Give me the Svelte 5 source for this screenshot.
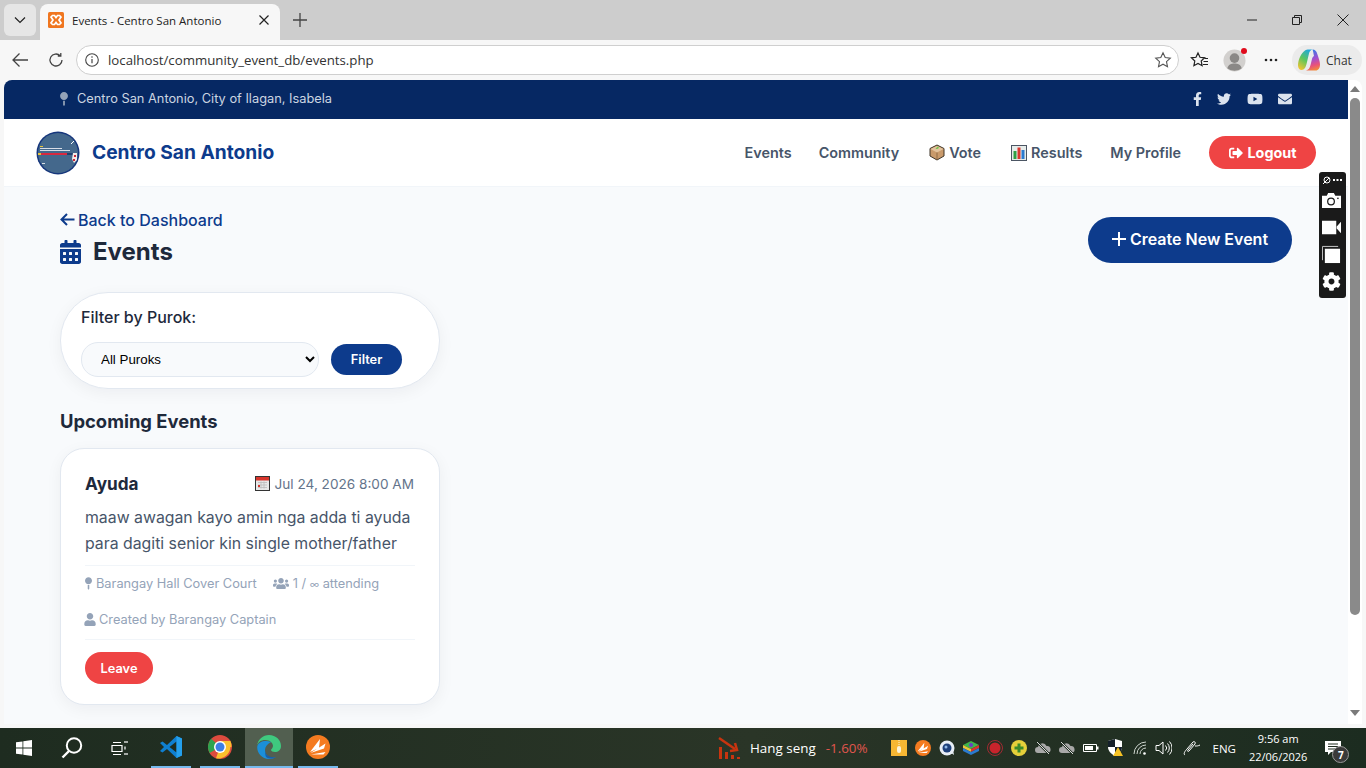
<script>
  const nav = [
    { label: 'Events' },
    { label: 'Community' },
    { label: 'Vote', icon: 'ballot' },
    { label: 'Results', icon: 'chart' },
    { label: 'My Profile' }
  ]
  const puroks = ['All Puroks']
</script>

<div class="screen">
  <div class="tabstrip">
    <button class="tab-menu" aria-label="Tabs">
      <svg width="14" height="14" viewBox="0 0 14 14"><path d="M2 4.5l5 5 5-5" fill="none" stroke="#222" stroke-width="1.2" /></svg>
    </button>
    <div class="tab">
      <svg class="favicon" width="16" height="16" viewBox="0 0 16 16">
        <rect width="16" height="16" rx="1.5" fill="#f0761f" />
        <path d="M4.5 3.500h2L8 5.500l1.500-2h2L13 5 11 8l2 3-1.500 1.500h-2L8 10.500l-1.500 2h-2L3 11l2-3-2-3z" fill="none" stroke="#fff" stroke-width="1.7" />
      </svg>
      <span class="tab-title">Events - Centro San Antonio</span>
      <svg class="tab-x" width="12" height="12" viewBox="0 0 12 12"><path d="M1.5 1.500l9 9m0-9l-9 9" stroke="#222" stroke-width="1.2" /></svg>
    </div>
    <svg class="new-tab" width="16" height="16" viewBox="0 0 16 16"><path d="M8 1v14M1 8h14" stroke="#444" stroke-width="1.3" /></svg>
    <div class="win-controls">
      <svg width="12" height="12" viewBox="0 0 12 12"><path d="M1 6h10" stroke="#222" /></svg>
      <svg width="12" height="12" viewBox="0 0 12 12"><path d="M1.5 3.500h7v7h-7zM3.500 3.500v-2h7v7h-2" fill="none" stroke="#222" /></svg>
      <svg width="14" height="14" viewBox="0 0 14 14"><path d="M1.5 1.500l11 11m0-11l-11 11" stroke="#222" /></svg>
    </div>
  </div>

  <div class="toolbar">
    <svg width="18" height="16" viewBox="0 0 18 16"><path d="M17 8H2M8.500 1.500L2 8l6.500 6.500" fill="none" stroke="#444" stroke-width="1.3" /></svg>
    <svg class="reload" width="16" height="16" viewBox="0 0 16 16"><path d="M14 8a6 6 0 1 1-1.800-4.300M12.800 1v3h-3" fill="none" stroke="#444" stroke-width="1.3" /></svg>
    <div class="address">
      <svg width="14" height="14" viewBox="0 0 14 14"><circle cx="7" cy="7" r="6.3" fill="none" stroke="#444" stroke-width="1.1" /><path d="M7 6v4.200" stroke="#444" stroke-width="1.2" /><circle cx="7" cy="4" r=".8" fill="#444" /></svg>
      <span class="url">localhost/community_event_db/events.php</span>
      <svg class="star" width="18" height="18" viewBox="0 0 18 18"><path d="M9 1.800l2.200 4.700 5.100.6-3.800 3.500 1 5.100L9 13.200l-4.500 2.500 1-5.100L1.700 7.100l5.100-.6z" fill="none" stroke="#555" stroke-width="1.1" /></svg>
    </div>
    <svg class="favs" width="20" height="18" viewBox="0 0 20 18"><path d="M8 2l2 4.300 4.600.5-3.400 3.200.9 4.700L8 12.400 3.900 14.700l.9-4.700L1.400 6.800 6 6.300z" fill="none" stroke="#222" stroke-width="1.2" /><path d="M14.500 7.500h3.500M13.500 10.500h4.500M13 13.500h5" stroke="#222" /></svg>
    <div class="avatar">
      <svg width="23" height="23" viewBox="0 0 24 24"><circle cx="12" cy="12" r="11.500" fill="#d2d0ce" /><circle cx="12" cy="9.500" r="5" fill="#8a8886" /><path d="M4.500 20c1-4 4-5 7.500-5s6.500 1 7.500 5a11.500 11.500 0 0 1-15 0z" fill="#8a8886" /></svg>
      <span class="dot"></span>
    </div>
    <svg class="more" width="14" height="4" viewBox="0 0 14 4"><circle cx="2" cy="2" r="1.300" fill="#222" /><circle cx="7" cy="2" r="1.300" fill="#222" /><circle cx="12" cy="2" r="1.300" fill="#222" /></svg>
    <div class="chat">
      <svg width="22" height="22" viewBox="0 0 22 22">
        <defs>
          <linearGradient id="cp1" x1="0.7" y1="0" x2="0.2" y2="1"><stop offset="0" stop-color="#1fa8dc" /><stop offset=".5" stop-color="#5cc65c" /><stop offset="1" stop-color="#f4c430" /></linearGradient>
          <linearGradient id="cp2" x1="0.4" y1="0" x2="0.6" y2="1"><stop offset="0" stop-color="#2f7be8" /><stop offset=".45" stop-color="#a04fd0" /><stop offset=".75" stop-color="#e8517c" /><stop offset="1" stop-color="#f3893a" /></linearGradient>
        </defs>
        <path d="M7 1.500C8 .8 9 .5 11 .5h3.500c-2 .5-3 2-3.500 4L9 13c-1 5-2.500 8-5.500 8C1.500 21 0 19 0 16.500 0 11 3 4 7 1.500z" fill="url(#cp1)" />
        <path d="M14.500 .5c2.500 0 4 1.500 4.800 4.500C20.500 9 22 12 22 15.500c0 3.500-1.500 6-4.500 6H8c2.500-.5 3.800-2.500 4.500-5.500l1.500-6c.3-1.500 1-2.500 2-3-.5-2-.7-4.500-1.500-6.500z" fill="url(#cp2)" />
      </svg>
      <span>Chat</span>
    </div>
  </div>

  <div class="viewport">
    <div class="page">
      <div class="topbar">
        <span class="topbar-loc">
          <svg width="8" height="14" viewBox="0 0 288 512"><path d="M112 316.94v156.690l22.020 33.020c4.750 7.120 15.220 7.120 19.970 0L176 473.630V316.940c-10.390 1.920-21.060 3.060-32 3.060s-21.610-1.140-32-3.060zM144 0C64.470 0 0 64.470 0 144s64.470 144 144 144 144-64.470 144-144S223.530 0 144 0z" fill="#94a3b8" /></svg>
          Centro San Antonio, City of Ilagan, Isabela
        </span>
        <div class="socials">
          <svg width="9" height="14" viewBox="0 0 320 512"><path d="M279.140 288l14.220-92.660h-88.910v-60.130c0-25.350 12.420-50.060 52.240-50.060h40.420V6.260S260.430 0 225.360 0c-73.220 0-121.080 44.380-121.080 124.720v70.620H22.890V288h81.390v224h100.170V288z" /></svg>
          <svg width="14" height="14" viewBox="0 0 512 512"><path d="M459.370 151.716c.325 4.548.325 9.097.325 13.645 0 138.720-105.583 298.558-298.558 298.558-59.452 0-114.680-17.219-161.137-47.106 8.447.974 16.568 1.299 25.340 1.299 49.055 0 94.213-16.568 130.274-44.832-46.132-.975-84.792-31.188-98.112-72.772 6.498.974 12.995 1.624 19.818 1.624 9.421 0 18.843-1.300 27.614-3.573-48.081-9.747-84.143-51.980-84.143-102.985v-1.299c13.969 7.797 30.214 12.670 47.431 13.319-28.264-18.843-46.781-51.005-46.781-87.391 0-19.492 5.197-37.360 14.294-52.954 51.655 63.675 129.300 105.258 216.365 109.807-1.624-7.797-2.599-15.918-2.599-24.040 0-57.828 46.782-104.934 104.934-104.934 30.213 0 57.502 12.670 76.670 33.137 23.715-4.548 46.456-13.320 66.599-25.340-7.798 24.366-24.366 44.833-46.132 57.827 21.117-2.273 41.584-8.122 60.426-16.243-14.292 20.791-32.161 39.308-52.628 54.253z" /></svg>
          <svg width="16" height="14" viewBox="0 0 576 512"><path d="M549.655 124.083c-6.281-23.650-24.787-42.276-48.284-48.597C458.781 64 288 64 288 64S117.220 64 74.629 75.486c-23.497 6.322-42.003 24.947-48.284 48.597-11.412 42.867-11.412 132.305-11.412 132.305s0 89.438 11.412 132.305c6.281 23.650 24.787 41.500 48.284 47.821C117.220 448 288 448 288 448s170.780 0 213.371-11.486c23.497-6.321 42.003-24.171 48.284-47.821 11.412-42.867 11.412-132.305 11.412-132.305s0-89.438-11.412-132.305zm-317.510 213.508V175.185l142.739 81.205-142.739 81.201z" /></svg>
          <svg width="14" height="14" viewBox="0 0 512 512"><path d="M502.300 190.800c3.900-3.100 9.700-.2 9.700 4.700V400c0 26.500-21.500 48-48 48H48c-26.500 0-48-21.500-48-48V195.600c0-5 5.700-7.800 9.700-4.700 22.400 17.400 52.100 39.500 154.100 113.600 21.100 15.400 56.700 47.800 92.200 47.600 35.700.3 72-32.800 92.300-47.600 102-74.100 131.600-96.300 154-113.700zM256 320c23.200.4 56.600-29.200 73.400-41.400 132.700-96.300 142.800-104.700 173.400-128.700 5.800-4.500 9.200-11.500 9.200-18.900v-19c0-26.500-21.500-48-48-48H48C21.500 64 0 85.500 0 112v19c0 7.400 3.400 14.300 9.200 18.900 30.600 23.900 40.700 32.400 173.400 128.700 16.800 12.200 50.200 41.800 73.400 41.400z" /></svg>
        </div>
      </div>

      <header class="header">
        <div class="brand">
          <svg class="logo" width="44" height="44" viewBox="0 0 44 44">
            <circle cx="22" cy="22" r="21.5" fill="#16367c" />
            <circle cx="22" cy="22" r="20" fill="#44688c" />
            <path d="M4 15h3v1H4z" fill="#e8c53a" />
            <path d="M4 17h22v1H4zM4 19h30v1H4z" fill="#d8dde6" />
            <path d="M2 22h3v2H2z" fill="#e8c53a" />
            <path d="M5 22h26v2H5z" fill="#d8283f" />
            <path d="M31 22h6v2h-6z" fill="#1e3f6e" />
            <path d="M37 22h4v7l-3 3-2-4z" fill="#f4e9e4" />
            <path d="M38 24h2v2h-2zM37 28h2v2h-2z" fill="#c9283a" />
            <path d="M35 13l3-3" stroke="#fff" stroke-width="1" />
            <path d="M6 32h3v1H6z" fill="#d8dde6" />
          </svg>
          <span class="brand-name">Centro San Antonio</span>
        </div>
        <nav class="nav">
          {#each nav as item}
            <span class="nav-link" class:with-icon={item.icon}>
              {#if item.icon === 'ballot'}
                <svg width="16" height="17" viewBox="0 0 16 17">
                  <path d="M8 1l7 3.500V12l-7 4-7-4V4.500z" fill="#c99a6b" stroke="#3f3529" stroke-width="1" />
                  <path d="M1.500 5L8 8.500 14.500 5 8 2z" fill="#e3c39d" />
                  <path d="M8 8.500V15.500" stroke="#8f6a45" />
                  <path d="M6.500 4.500L9 2.500l1 1.500-2 1z" fill="#6cc24a" />
                </svg>
              {:else if item.icon === 'chart'}
                <svg width="16" height="16" viewBox="0 0 16 16">
                  <rect x=".5" y=".5" width="15" height="15" fill="#e6ecea" stroke="#4b5563" />
                  <rect x="2.5" y="6" width="3" height="8" fill="#2f9e44" />
                  <rect x="6.5" y="2.500" width="3" height="11.500" fill="#d9372f" />
                  <rect x="10.500" y="5" width="3" height="9" fill="#2b7bd0" />
                </svg>
              {/if}
              {item.label}
            </span>
          {/each}
          <button class="logout">
            <svg width="16" height="14" viewBox="0 0 512 512"><path fill="#fff" d="M497 273L329 441c-15 15-41 4.500-41-17v-96H152c-13.300 0-24-10.700-24-24v-96c0-13.300 10.700-24 24-24h136V88c0-21.400 25.900-32 41-17l168 168c9.300 9.400 9.300 24.600 0 34zM192 436v-40c0-6.600-5.400-12-12-12H96c-17.700 0-32-14.300-32-32V160c0-17.700 14.300-32 32-32h84c6.600 0 12-5.400 12-12V76c0-6.600-5.400-12-12-12H96c-53 0-96 43-96 96v192c0 53 43 96 96 96h84c6.600 0 12-5.400 12-12z" /></svg>
            Logout
          </button>
        </nav>
      </header>

      <main class="main">
        <div class="title-row">
          <div>
            <span class="back">
              <svg width="15" height="13" viewBox="0 0 15 13"><path d="M14.500 6.500H2M7 1L1.500 6.500 7 12" fill="none" stroke="#0d3b8c" stroke-width="2" /></svg>
              Back to Dashboard
            </span>
            <h1>
              <svg width="21" height="24" viewBox="0 0 448 512"><path fill="#0d3b8c" d="M0 464c0 26.500 21.500 48 48 48h352c26.500 0 48-21.500 48-48V192H0v272zm320-196c0-6.600 5.400-12 12-12h40c6.600 0 12 5.400 12 12v40c0 6.600-5.400 12-12 12h-40c-6.600 0-12-5.400-12-12v-40zm0 128c0-6.600 5.400-12 12-12h40c6.600 0 12 5.400 12 12v40c0 6.600-5.400 12-12 12h-40c-6.600 0-12-5.400-12-12v-40zM192 268c0-6.600 5.400-12 12-12h40c6.600 0 12 5.400 12 12v40c0 6.600-5.400 12-12 12h-40c-6.600 0-12-5.400-12-12v-40zm0 128c0-6.600 5.400-12 12-12h40c6.600 0 12 5.400 12 12v40c0 6.600-5.400 12-12 12h-40c-6.600 0-12-5.400-12-12v-40zM64 268c0-6.600 5.400-12 12-12h40c6.600 0 12 5.400 12 12v40c0 6.600-5.400 12-12 12H76c-6.600 0-12-5.400-12-12v-40zm0 128c0-6.600 5.400-12 12-12h40c6.600 0 12 5.400 12 12v40c0 6.600-5.400 12-12 12H76c-6.600 0-12-5.400-12-12v-40zM400 64h-48V16c0-8.800-7.200-16-16-16h-32c-8.800 0-16 7.200-16 16v48H160V16c0-8.800-7.200-16-16-16h-32c-8.800 0-16 7.200-16 16v48H48C21.500 64 0 85.500 0 112v48h448v-48c0-26.500-21.500-48-48-48z" /></svg>
              Events
            </h1>
          </div>
          <button class="create">
            <svg width="14" height="14" viewBox="0 0 14 14"><path d="M7 0v14M0 7h14" stroke="#fff" stroke-width="2" /></svg>
            Create New Event
          </button>
        </div>

        <form class="filter" onsubmit={(e) => e.preventDefault()}>
          <label for="purok">Filter by Purok:</label>
          <div class="filter-row">
            <select id="purok">
              {#each puroks as p}
                <option>{p}</option>
              {/each}
            </select>
            <button class="filter-btn">Filter</button>
          </div>
        </form>

        <h2>Upcoming Events</h2>

        <article class="card">
          <div class="card-head">
            <h3>Ayuda</h3>
            <span class="date">
              <svg width="15" height="15" viewBox="0 0 15 15">
                <rect x=".5" y=".5" width="14" height="14" fill="#e8e8e8" stroke="#333" />
                <rect x="1" y="1" width="13" height="3.500" fill="#d8352c" />
                <path d="M3 6.500h9M3 9h9M3 11.500h9M6 5.500v7M9 5.500v7" stroke="#bbb" stroke-width=".8" />
                <rect x="3" y="9" width="2" height="2" fill="#d8352c" />
              </svg>
              Jul 24, 2026 8:00 AM
            </span>
          </div>
          <p class="desc">maaw awagan kayo amin nga adda ti ayuda para dagiti senior kin single mother/father</p>
          <div class="meta">
            <div class="meta-row first">
              <span>
                <svg width="7" height="13" viewBox="0 0 288 512"><path fill="#94a3b8" d="M112 316.94v156.690l22.020 33.020c4.750 7.120 15.220 7.120 19.970 0L176 473.630V316.940c-10.390 1.920-21.060 3.060-32 3.060s-21.610-1.140-32-3.060zM144 0C64.470 0 0 64.470 0 144s64.470 144 144 144 144-64.470 144-144S223.530 0 144 0z" /></svg>
                Barangay Hall Cover Court
              </span>
              <span>
                <svg width="16" height="13" viewBox="0 0 640 512"><path fill="#94a3b8" d="M96 224c35.300 0 64-28.700 64-64s-28.700-64-64-64-64 28.700-64 64 28.700 64 64 64zm448 0c35.300 0 64-28.700 64-64s-28.700-64-64-64-64 28.700-64 64 28.700 64 64 64zm32 32h-64c-17.600 0-33.500 7.100-45.100 18.600 40.300 22.100 68.900 62 75.100 109.400h66c17.700 0 32-14.300 32-32v-32c0-35.300-28.700-64-64-64zm-256 0c61.900 0 112-50.100 112-112S381.900 32 320 32 208 82.100 208 144s50.100 112 112 112zm76.800 32h-8.300c-20.800 10-43.900 16-68.500 16s-47.600-6-68.500-16h-8.300C179.600 288 128 339.600 128 403.200V432c0 26.500 21.500 48 48 48h288c26.500 0 48-21.500 48-48v-28.800c0-63.600-51.600-115.200-115.200-115.200zm-223.700-13.400C161.500 263.100 145.600 256 128 256H64c-35.300 0-64 28.700-64 64v32c0 17.700 14.300 32 32 32h65.900c6.300-47.400 34.900-87.300 75.200-109.400z" /></svg>
                <em>1 / <small>∞</small> attending</em>
              </span>
            </div>
            <div class="meta-row">
              <span>
                <svg class="user-ic" width="12" height="13" viewBox="0 0 448 512"><path fill="#94a3b8" d="M224 256c70.700 0 128-57.300 128-128S294.700 0 224 0 96 57.300 96 128s57.300 128 128 128zm89.600 32h-16.700c-22.200 10.200-46.900 16-72.900 16s-50.600-5.800-72.900-16h-16.700C60.200 288 0 348.200 0 422.400V464c0 26.500 21.500 48 48 48h352c26.500 0 48-21.500 48-48v-41.600c0-74.200-60.200-134.400-134.400-134.400z" /></svg>
                Created by Barangay Captain
              </span>
            </div>
          </div>
          <div class="card-foot">
            <button class="leave">Leave</button>
          </div>
        </article>
      </main>

      <div class="capture">
        <div class="capture-top">
          <svg width="9" height="9" viewBox="0 0 9 9"><circle cx="5" cy="4" r="3" fill="none" stroke="#fff" /><path d="M1 8l6-6" stroke="#fff" /></svg>
          <svg width="9" height="3" viewBox="0 0 9 3"><path d="M0 0h2v2H0zM3.500 0h2v2h-2zM7 0h2v2H7z" fill="#fff" /></svg>
        </div>
        <svg width="19" height="27" viewBox="0 0 20 16"><path d="M0 3h5l1.500-3h6L14 3h6v13H0z" fill="#fff" /><circle cx="9.500" cy="9" r="3.500" fill="none" stroke="#1a1a1a" stroke-width="1.3" /><rect x="16" y="5" width="1.500" height="1.500" fill="#1a1a1a" /></svg>
        <svg width="19" height="27" viewBox="0 0 20 14"><path d="M0 0h15v14H0zM15.500 6L20 1v12l-4.500-5z" fill="#fff" /></svg>
        <svg width="19" height="27" viewBox="0 0 20 18"><path d="M.5 15V.5H17" fill="none" stroke="#ccc" /><path d="M3 3h16v15H3z" fill="#fff" /></svg>
        <svg width="19" height="27" viewBox="0 0 512 512"><path fill="#fff" d="M487.400 315.700l-42.600-24.600c4.300-23.200 4.300-47 0-70.200l42.600-24.600c4.900-2.800 7.100-8.600 5.500-14-11.100-35.600-30-67.800-54.700-94.600-3.800-4.100-10-5.100-14.800-2.300L380.800 110c-17.900-15.400-38.500-27.300-60.800-35.100V25.800c0-5.600-3.900-10.500-9.400-11.700-36.700-8.200-74.300-7.800-109.200 0-5.500 1.200-9.400 6.100-9.400 11.700V75c-22.200 7.900-42.800 19.800-60.800 35.100L88.700 85.500c-4.900-2.800-11-1.900-14.800 2.300-24.700 26.700-43.600 58.900-54.700 94.600-1.700 5.400.6 11.200 5.500 14L67.300 221c-4.300 23.200-4.300 47 0 70.200l-42.600 24.600c-4.900 2.800-7.100 8.600-5.500 14 11.100 35.600 30 67.800 54.700 94.600 3.800 4.100 10 5.100 14.800 2.300l42.600-24.600c17.900 15.400 38.500 27.300 60.800 35.100v49.200c0 5.600 3.900 10.500 9.400 11.700 36.700 8.200 74.300 7.800 109.200 0 5.500-1.200 9.400-6.100 9.400-11.700v-49.200c22.200-7.900 42.800-19.800 60.800-35.100l42.600 24.600c4.900 2.800 11 1.900 14.800-2.300 24.700-26.700 43.600-58.900 54.700-94.600 1.500-5.500-.7-11.300-5.600-14.100zM256 336c-44.100 0-80-35.900-80-80s35.900-80 80-80 80 35.900 80 80-35.900 80-80 80z" /></svg>
      </div>
    </div>

    <div class="scrollbar">
      <svg width="10" height="6" viewBox="0 0 10 6"><path d="M5 0l5 6H0z" fill="#7a7a7a" /></svg>
      <div class="thumb"></div>
      <svg class="down" width="10" height="6" viewBox="0 0 10 6"><path d="M0 0h10L5 6z" fill="#7a7a7a" /></svg>
    </div>
  </div>

  <div class="taskbar">
    <svg class="start" width="16" height="16" viewBox="0 0 16 16"><path d="M0 2.300l6.500-.9v6.200H0zM7.300 1.300L16 0v7.600H7.300zM0 8.400h6.500v6.200L0 13.700zM7.300 8.400H16V16l-8.700-1.200z" fill="#fff" /></svg>
    <svg class="search" width="24" height="24" viewBox="0 0 24 24"><circle cx="14" cy="9.500" r="7.200" fill="none" stroke="#fff" stroke-width="2" /><path d="M9 15l-6.500 6.500" stroke="#fff" stroke-width="2.4" /></svg>
    <svg class="taskview" width="18" height="16" viewBox="0 0 18 16"><path d="M1 5.500h10v6H1zM2 2.500h8M2 14.500h8M14 1v2M14 6.500v3M14 13v2M16 1v2M16 13v2" fill="none" stroke="#fff" stroke-width="1.2" /></svg>
    <div class="app app-first">
      <svg width="24" height="24" viewBox="0 0 24 24"><path d="M17.500 1L8 10 3.500 6.500 1 8l4 4-4 4 2.500 1.500L8 14l9.500 9 5.500-2.500v-17z" fill="#0f7fd0" /><path d="M17.500 6.500v11L10.500 12z" fill="#1e2c1f" /><path d="M17.500 1L23 3.500v17L17.500 23z" fill="#24a0ed" /></svg>
    </div>
    <div class="app">
      <svg width="24" height="24" viewBox="0 0 24 24"><circle cx="12" cy="12" r="12" fill="#dd4b3e" /><path d="M12 12L1.600 18A12 12 0 0 1 3.200 3.800z" fill="#2ea44f" /><path d="M12 12l10.400 0A12 12 0 0 1 8 23.300z" fill="#fbc02d" /><path d="M12 6h10.400A12 12 0 0 1 23.500 12H12z" fill="#fbc02d" /><circle cx="12" cy="12" r="6" fill="#fff" /><circle cx="12" cy="12" r="4.500" fill="#3d7fe6" /></svg>
    </div>
    <div class="app active">
      <svg width="24" height="24" viewBox="0 0 24 24"><path d="M12 0c7 0 12 5 12 11 0 4-3 6-6 6-2 0-4-1-4-2 0-1 2-2 2-4 0-3-3-6-8-6-4 0-7 2-8 6 1-7 6-11 12-11z" fill="#3fc97f" /><path d="M.2 12C0 18 5 24 12 24c3 0 5-1 7-2-6 2-11-1-11-7 0-3 2-6 6-8C9 5 1 6 .2 12z" fill="#1b8fd8" /><path d="M8 15c0 5 5 8 11 7-3 2-7 2-10 0-1-2-1-5-1-7z" fill="#1a5fa8" /></svg>
    </div>
    <div class="app app-last">
      <svg width="24" height="24" viewBox="0 0 24 24"><circle cx="12" cy="12" r="12" fill="#f47b20" /><path d="M4 17L14 4l-1 9zM4.500 18L19.500 8.500 18 13.500zM5 19.500l14.500-2.500-2 2.500z" fill="#fff" /></svg>
    </div>

    <div class="ticker">
      <svg width="26" height="24" viewBox="0 0 26 24"><path d="M1 2l16 11" stroke="#c8340f" stroke-width="2.5" fill="none" /><path d="M12 15l7-1-2-7" stroke="#c8340f" stroke-width="2.5" fill="none" /><path d="M1 11h3v12H1zM7 16h3v7H7zM13 19h3v4h-3zM19 21h3v2h-3z" fill="#c8340f" /></svg>
      <span class="ticker-name">Hang seng</span>
      <span class="ticker-val">-1.60%</span>
    </div>

    <div class="tray">
      <span class="t-zip"><svg width="16" height="16" viewBox="0 0 16 16"><rect width="16" height="16" fill="#f7b733" /><rect x="6" y="6" width="4" height="7" rx="2" fill="#fdf3d8" /><path d="M8 0v6" stroke="#fdf3d8" stroke-dasharray="1 1" /></svg></span>
      <svg width="16" height="16" viewBox="0 0 24 24"><circle cx="12" cy="12" r="12" fill="#f47b20" /><path d="M4 17L14 4l-1 9zM4.500 18L19.500 8.500 18 13.500zM5 19.500l14.500-2.500-2 2.500z" fill="#fff" /></svg>
      <svg width="16" height="16" viewBox="0 0 16 16"><circle cx="8" cy="8" r="7.500" fill="#e8eef5" /><circle cx="8" cy="8" r="4.500" fill="#1d3f7a" /><circle cx="7" cy="7" r="1.500" fill="#8fb8e8" /><path d="M11 12l4 3-1-5z" fill="#e8eef5" /></svg>
      <svg width="16" height="16" viewBox="0 0 16 16"><path d="M8 1l8 4-8 4-8-4z" fill="#3fb54a" /><path d="M0 5l8 4v3L0 8z" fill="#e8c53a" /><path d="M16 5L8 9v3l8-4z" fill="#d8352c" /><path d="M0 8l8 4 8-4v3l-8 4-8-4z" fill="#2b7bd0" /><circle cx="8" cy="5" r="2" fill="#6a3ec8" /></svg>
      <svg width="16" height="16" viewBox="0 0 16 16"><circle cx="8" cy="8" r="7.500" fill="none" stroke="#a32a32" /><circle cx="8" cy="8" r="5.500" fill="#c8242c" /></svg>
      <svg width="16" height="16" viewBox="0 0 16 16"><circle cx="8" cy="8" r="8" fill="#e5cf3a" /><path d="M6.500 3.500h3v3h3v3h-3v3h-3v-3h-3v-3h3z" fill="#3a8a2a" /></svg>
      <svg width="16" height="16" viewBox="0 0 16 16"><path d="M3 13a3 3 0 0 1 0-6 4.500 4.500 0 0 1 8.500-1A3.500 3.500 0 0 1 12.500 13z" fill="#a8a8a8" /><path d="M2 2l12 12" stroke="#1e2c1f" stroke-width="2.2" /><path d="M2 2l12 12" stroke="#ddd" /></svg>
      <svg width="16" height="16" viewBox="0 0 16 16"><path d="M3 13a3 3 0 0 1 0-6 4.500 4.500 0 0 1 8.500-1A3.500 3.500 0 0 1 12.500 13z" fill="#a8a8a8" /><path d="M2 2l12 12" stroke="#1e2c1f" stroke-width="2.2" /><path d="M2 2l12 12" stroke="#ddd" /></svg>
      <svg width="16" height="16" viewBox="0 0 16 16"><path d="M.5 4.500h13v7H.5z" fill="none" stroke="#fff" /><path d="M2 6h8v4H2z" fill="#fff" /><path d="M14 6.500h1.500v3H14z" fill="#fff" /></svg>
      <svg width="16" height="18" viewBox="0 0 16 18"><path d="M8 0l7 2v6c0 4-3 7-7 9-4-2-7-5-7-9V2z" fill="#fff" /><path d="M8 0v8H1V2zM8 8h7c0 4-3 7-7 9z" fill="#15202b" /><path d="M11 8l5 9H6z" fill="#f7c325" /></svg>
      <svg class="wifi" width="16" height="16" viewBox="0 0 16 16"><path d="M1 14A12 12 0 0 1 13 2M4 14a9 9 0 0 1 9-9M7 14a6 6 0 0 1 6-6" fill="none" stroke="#cfd6cf" /><circle cx="11.500" cy="13.500" r="1.300" fill="#fff" /></svg>
      <svg class="speaker" width="17" height="16" viewBox="0 0 17 16"><path d="M1 5.500h3L8 2v12l-4-3.500H1z" fill="none" stroke="#fff" /><path d="M10.500 5.500a3.500 3.500 0 0 1 0 5M12.500 3.500a6.500 6.500 0 0 1 0 9M14.500 1.500a9.500 9.500 0 0 1 0 13" fill="none" stroke="#fff" /></svg>
      <svg class="pen" width="18" height="17" viewBox="0 0 18 17"><path d="M2 15c-2-1 0-4 2-6l6-7c1-1 3 0 2 2l-6 7c-1 1-2 0-1-1l5-6M12 6c2 0 3 0 5-1" fill="none" stroke="#fff" /></svg>
      <span class="lang">ENG</span>
      <div class="clock"><span>9:56 am</span><span>22/06/2026</span></div>
      <div class="notif">
        <svg width="16" height="14" viewBox="0 0 16 14"><path d="M0 0h16v11H6l-3 3v-3H0z" fill="#fff" /><path d="M3 3h10M3 5.500h10M3 8h7" stroke="#1e2c1f" /></svg>
        <span class="badge">7</span>
      </div>
    </div>
  </div>
</div>

<style>
  :global(body) {
    margin: 0;
    overflow: hidden;
  }

  .screen {
    width: 1366px;
    height: 768px;
    display: flex;
    flex-direction: column;
    background: #f7f7f7;
    font-family: Inter, "Liberation Sans", sans-serif;
    overflow: hidden;
  }

  button {
    font-family: inherit;
    border: none;
    cursor: pointer;
  }

  /* browser chrome */
  .tabstrip {
    height: 40px;
    flex: none;
    display: flex;
    align-items: flex-end;
    background: #cdcdcd;
    padding-left: 4px;
  }

  .tab-menu {
    width: 32px;
    height: 32px;
    margin-bottom: 4px;
    background: #e6e6e6;
    border-radius: 6px;
    display: flex;
    align-items: center;
    justify-content: center;
    padding: 0;
  }

  .tab {
    width: 240px;
    height: 36px;
    margin-left: 4px;
    background: #f7f7f7;
    border-radius: 8px 8px 0 0;
    display: flex;
    align-items: center;
    padding: 0 8px 4px;
    box-sizing: border-box;
  }

  .tab-title {
    flex: 1;
    margin-left: 8px;
    font-family: "Open Sans", "Liberation Sans", sans-serif;
    font-size: 11.5px;
    color: #222;
  }

  .tab-x {
    margin-right: 2px;
  }

  .new-tab {
    margin: 0 0 12px 12px;
  }

  .win-controls {
    margin-left: auto;
    height: 40px;
    display: flex;
    align-items: center;
    gap: 33px;
    padding-right: 16px;
  }

  .toolbar {
    height: 40px;
    flex: none;
    display: flex;
    align-items: center;
    padding-left: 11px;
    box-sizing: border-box;
  }

  .reload {
    margin-left: 19px;
  }

  .address {
    width: 1103px;
    height: 30px;
    margin-left: 12px;
    background: #fff;
    border: 1px solid #cfcfcf;
    border-radius: 15px;
    box-sizing: border-box;
    display: flex;
    align-items: center;
    padding: 0 6px 0 8px;
  }

  .url {
    flex: 1;
    margin-left: 9px;
    font-family: "Open Sans", "Liberation Sans", sans-serif;
    font-size: 13.25px;
    color: #333;
  }

  .favs {
    margin-left: 11px;
  }

  .avatar {
    position: relative;
    margin-left: 13px;
    display: flex;
  }

  .dot {
    position: absolute;
    top: -1px;
    right: -1px;
    width: 6px;
    height: 6px;
    border-radius: 50%;
    background: #e00b1c;
  }

  .more {
    margin-left: 18px;
  }

  .chat {
    margin-left: 14px;
    width: 70px;
    height: 30px;
    box-sizing: border-box;
    padding-left: 6px;
    border-radius: 15px;
    background: #ebebeb;
    display: flex;
    align-items: center;
    gap: 6px;
    font-family: "Open Sans", "Liberation Sans", sans-serif;
    font-size: 12px;
    color: #333;
  }

  .viewport {
    height: 644px;
    flex: none;
    margin: 0 4px 4px;
    display: flex;
    border-radius: 8px 8px 0 0;
    overflow: hidden;
    background: #fff;
  }

  .scrollbar {
    width: 14px;
    flex: none;
    display: flex;
    flex-direction: column;
    align-items: center;
    padding-top: 6px;
    box-sizing: border-box;
  }

  .thumb {
    width: 10px;
    height: 517px;
    margin-top: 6px;
    border-radius: 5px;
    background: #8a8a8a;
  }

  .down {
    margin-top: auto;
    margin-bottom: 8px;
  }

  /* page */
  .page {
    flex: 1;
    position: relative;
    overflow: hidden;
    background: #f8fafc;
  }

  .topbar {
    height: 39px;
    box-sizing: border-box;
    background: #062863;
    display: flex;
    align-items: center;
    justify-content: space-between;
    padding: 0 56px 2px;
    font-size: 12.8px;
    color: #cbd5e1;
  }

  .topbar-loc {
    display: flex;
    align-items: center;
    gap: 9px;
  }

  .socials {
    display: flex;
    align-items: center;
    gap: 15.5px;
  }

  .socials svg {
    fill: #dbe3ee;
  }

  .header {
    height: 68px;
    box-sizing: border-box;
    background: #fff;
    border-bottom: 1px solid #f1f5f9;
    display: flex;
    align-items: center;
    justify-content: space-between;
    padding: 0 32px;
  }

  .brand {
    display: flex;
    align-items: center;
    gap: 12px;
  }

  .brand-name {
    font-size: 19.2px;
    font-weight: 700;
    color: #0d3b8c;
    margin-bottom: 2px;
  }

  .nav {
    display: flex;
    align-items: center;
    gap: 28px;
  }

  .nav-link {
    display: flex;
    align-items: center;
    gap: 5px;
    font-size: 14.4px;
    font-weight: 600;
    color: #475569;
  }

  .nav-link:first-child {
    margin-right: -1px;
  }

  .nav-link.with-icon {
    gap: 4px;
    margin-left: 2px;
  }

  .logout {
    width: 107px;
    height: 33px;
    border-radius: 17px;
    background: #ef4444;
    color: #fff;
    font-size: 14.4px;
    font-weight: 700;
    display: flex;
    align-items: center;
    justify-content: center;
    gap: 3px;
    padding: 0;
  }

  .main {
    padding: 25px 56px;
  }

  .title-row {
    display: flex;
    align-items: center;
    justify-content: space-between;
  }

  .back {
    display: flex;
    align-items: center;
    gap: 3px;
    height: 19px;
    margin-top: -2px;
    font-size: 16px;
    font-weight: 500;
    color: #0d3b8c;
  }

  h1 {
    margin: 6px 0 0;
    display: flex;
    align-items: center;
    gap: 12px;
    height: 33px;
    font-size: 24px;
    font-weight: 700;
    color: #1e293b;
  }

  .create {
    width: 204px;
    height: 46px;
    border-radius: 23px;
    background: #0d3b8c;
    color: #fff;
    font-size: 16px;
    font-weight: 600;
    display: flex;
    align-items: center;
    justify-content: center;
    gap: 4px;
    padding: 0 0 2px;
  }

  .filter {
    width: 380px;
    height: 97px;
    box-sizing: border-box;
    margin-top: 24px;
    padding: 15px 20px 0;
    background: #fff;
    border: 1px solid #e2e8f0;
    border-radius: 48px;
    box-shadow: 0 4px 16px rgba(15, 23, 42, 0.05);
  }

  .filter label {
    display: block;
    font-size: 16px;
    font-weight: 500;
    line-height: 19px;
    color: #1e293b;
  }

  .filter-row {
    display: flex;
    align-items: center;
    gap: 12px;
    margin-top: 15px;
  }

  select {
    width: 238px;
    height: 35px;
    box-sizing: border-box;
    padding: 0 15px;
    background: #f8fafc;
    border: 1px solid #e2e8f0;
    border-radius: 17px;
    font-family: "Liberation Sans", sans-serif;
    font-size: 13.333px;
    color: #000;
  }

  .filter-btn {
    width: 71px;
    height: 31px;
    border-radius: 16px;
    background: #0d3b8c;
    color: #fff;
    font-size: 12.8px;
    font-weight: 600;
    padding: 0;
  }

  h2 {
    margin: 21px 0 16px;
    font-size: 18.4px;
    line-height: 22px;
    font-weight: 700;
    color: #1e293b;
  }

  .card {
    width: 380px;
    height: 257px;
    box-sizing: border-box;
    padding: 23px 24px 24px;
    background: #fff;
    border: 1px solid #e2e8f0;
    border-radius: 24px;
    box-shadow: 0 4px 16px rgba(15, 23, 42, 0.05);
  }

  .card-head {
    display: flex;
    align-items: center;
    justify-content: space-between;
    height: 22px;
  }

  h3 {
    margin: 0;
    font-size: 17.2px;
    font-weight: 700;
    color: #1e293b;
  }

  .date {
    display: flex;
    align-items: center;
    gap: 5px;
    margin: 1px 1px 0 0;
    font-size: 13.6px;
    color: #64748b;
  }

  .desc {
    margin: 11px 0 0;
    font-size: 15.84px;
    line-height: 26px;
    color: #475569;
  }

  .meta {
    margin-top: 8px;
    padding: 0 0 2px;
    border-top: 1px solid #f1f5f9;
    border-bottom: 1px solid #f1f5f9;
  }

  .meta-row {
    display: flex;
    gap: 16px;
    height: 36px;
    align-items: center;
    font-size: 12.8px;
    color: #94a3b8;
  }

  .meta-row.first {
    margin-top: -1px;
  }

  .meta-row span {
    display: flex;
    align-items: center;
    gap: 4px;
  }

  .meta-row em {
    font-style: normal;
  }

  .meta-row small {
    font-size: 10px;
  }

  .user-ic {
    margin: 0 -1px;
  }

  .card-foot {
    margin-top: 12px;
  }

  .leave {
    width: 68px;
    height: 32px;
    border-radius: 16px;
    background: #ef4444;
    color: #fff;
    font-size: 12.8px;
    font-weight: 600;
    padding: 0;
  }

  .capture {
    position: absolute;
    top: 92px;
    right: 2px;
    width: 27px;
    height: 126px;
    border-radius: 3px;
    background: #1a1a1a;
    display: flex;
    flex-direction: column;
    align-items: center;
    padding: 4px 2px 0 0;
    box-sizing: border-box;
  }

  .capture-top {
    display: flex;
    align-items: center;
    gap: 2px;
    height: 9px;
    margin-bottom: 2px;
  }

  /* taskbar */
  .taskbar {
    height: 40px;
    flex: none;
    display: flex;
    align-items: center;
    background: linear-gradient(90deg, #1e2c20, #2a3527 55%, #1c2c20);
    color: #fff;
    font-family: "Open Sans", "Liberation Sans", sans-serif;
  }

  .start {
    margin-left: 16px;
  }

  .search {
    margin-left: 28px;
  }

  .taskview {
    margin-left: 27px;
  }

  .app {
    width: 40px;
    height: 40px;
    margin-left: 9px;
    box-sizing: border-box;
    border-bottom: 2px solid #76b9ed;
    display: flex;
    align-items: center;
    justify-content: center;
  }

  .app-first {
    margin-left: 22px;
  }

  .app.active {
    width: 48px;
    margin-left: 5px;
    background: #525f50;
  }

  .app-last {
    margin-left: 5px;
  }

  .ticker {
    display: flex;
    align-items: center;
    margin-left: 380px;
  }

  .ticker-name {
    margin-left: 6px;
    font-size: 13.4px;
  }

  .ticker-val {
    margin-left: 10px;
    font-size: 13.4px;
    color: #e0564e;
  }

  .tray {
    display: flex;
    align-items: center;
    gap: 8px;
    margin-left: 23px;
  }

  .t-zip {
    display: flex;
  }

  .wifi {
    margin-left: 2px;
  }

  .speaker {
    margin-left: -2px;
  }

  .pen {
    margin-left: 3px;
  }

  .lang {
    margin-left: 4px;
    font-size: 11.5px;
  }

  .clock {
    margin-left: 5px;
    display: flex;
    flex-direction: column;
    align-items: center;
    font-size: 11px;
    line-height: 18px;
  }

  .notif {
    position: relative;
    margin-left: 10px;
    display: flex;
  }

  .badge {
    position: absolute;
    right: -8px;
    bottom: -8px;
    width: 15px;
    height: 15px;
    border-radius: 50%;
    background: #3a3a3a;
    border: 1px solid #999;
    font-size: 10px;
    font-weight: 700;
    display: flex;
    align-items: center;
    justify-content: center;
  }
</style>
